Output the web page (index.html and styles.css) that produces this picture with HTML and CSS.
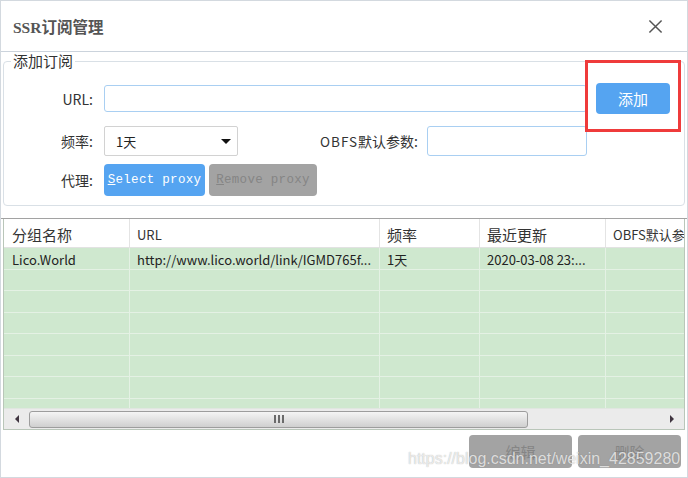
FILE: index.html
```html
<!DOCTYPE html>
<html>
<head>
<meta charset="utf-8">
<link rel="stylesheet" href="styles.css">
</head>
<body>
<div class="window">
  <div class="titlebar">
    <span class="title">SSR订阅管理</span>
    <svg class="close" viewBox="0 0 16 16" width="16" height="16"><path d="M1.5 1.5L14.5 14.5M14.5 1.5L1.5 14.5" stroke="#555" stroke-width="1.6" fill="none"/></svg>
  </div>
  <fieldset class="group">
    <legend class="legend">添加订阅</legend>
    <div class="group-body">
      <div class="row row-url">
        <span class="lbl">URL:</span>
        <div class="input input-url"></div>
        <button class="btn-add">添加</button>
      </div>
      <div class="row row-freq">
        <span class="lbl">频率:</span>
        <div class="select"><span>1天</span><span class="caret"></span></div>
        <span class="lbl-obfs"><span class="wide">OBFS</span>默认参数:</span>
        <div class="input input-obfs"></div>
      </div>
      <div class="row row-proxy">
        <span class="lbl">代理:</span>
        <button class="btn-mono btn-select"><u>S</u>elect proxy</button>
        <button class="btn-mono btn-remove"><u>R</u>emove proxy</button>
      </div>
    </div>
  </fieldset>
  <div class="divider"></div>
  <div class="grid">
    <div class="grid-head">
      <div class="hcell c1">分组名称</div>
      <div class="hcell c2 latin">URL</div>
      <div class="hcell c3">频率</div>
      <div class="hcell c4">最近更新</div>
      <div class="hcell c5">OBFS默认参数</div>
    </div>
    <div class="grid-body">
      <div class="grow">
        <div class="cell">Lico.World</div>
        <div class="cell">http://www.lico.world/link/IGMD765f...</div>
        <div class="cell">1天</div>
        <div class="cell">2020-03-08 23:...</div>
        <div class="cell"></div>
      </div>
      <div class="grow"><div class="cell"></div><div class="cell"></div><div class="cell"></div><div class="cell"></div><div class="cell"></div></div>
      <div class="grow"><div class="cell"></div><div class="cell"></div><div class="cell"></div><div class="cell"></div><div class="cell"></div></div>
      <div class="grow"><div class="cell"></div><div class="cell"></div><div class="cell"></div><div class="cell"></div><div class="cell"></div></div>
      <div class="grow"><div class="cell"></div><div class="cell"></div><div class="cell"></div><div class="cell"></div><div class="cell"></div></div>
      <div class="grow"><div class="cell"></div><div class="cell"></div><div class="cell"></div><div class="cell"></div><div class="cell"></div></div>
      <div class="grow"><div class="cell"></div><div class="cell"></div><div class="cell"></div><div class="cell"></div><div class="cell"></div></div>
      <div class="grow"><div class="cell"></div><div class="cell"></div><div class="cell"></div><div class="cell"></div><div class="cell"></div></div>
    </div>
    <div class="hscroll">
      <div class="sarrow"><span class="tri-left"></span></div>
      <div class="strack">
        <div class="sthumb"><span class="grip"></span><span class="grip"></span><span class="grip"></span></div>
      </div>
      <div class="sarrow"><span class="tri-right"></span></div>
    </div>
  </div>
  <div class="footer">
    <button class="btn-foot">编辑</button>
    <button class="btn-foot">删除</button>
  </div>
  <div class="watermark">https://blog.csdn.net/weixin_42859280</div>
  <div class="annot"></div>
</div>
</body>
</html>
```
FILE: styles.css
```css
* { box-sizing: border-box; margin: 0; padding: 0; }
html, body { width: 688px; height: 478px; overflow: hidden; background: #fff; }
body { font-family: "Noto Sans CJK SC", "Microsoft YaHei", sans-serif; font-size: 13px; color: #333; }

.window {
  position: relative;
  width: 688px; height: 478px;
  border: 1px solid #d3d9df;
  display: flex; flex-direction: column;
  background: #fff;
}

.titlebar {
  height: 51px; flex: none;
  display: flex; align-items: center; justify-content: space-between;
  padding: 0 24px 0 12px;
  border-bottom: 1px solid #cbd3dc;
}
.title { font-family: "Liberation Serif", "Noto Sans CJK SC", serif; font-weight: bold; font-size: 15.5px; color: #555; }
.close { display: block; width: 15px; height: 15px; }

.group {
  margin: 0 2px;
  border: 1px solid #d9e0e6;
  border-radius: 4px;
  padding: 13px 0 9px 0;
  min-width: 0;
}
.legend { margin-left: 7px; padding: 0 2px; font-size: 15px; line-height: 18px; color: #333; }
.group-body { display: flex; flex-direction: column; gap: 12px; }
.row { display: flex; align-items: center; }
.row-url { height: 31px; }
.row-freq { height: 30px; }
.row-proxy { height: 32px; margin-top: -4px; }
.lbl { width: 89px; margin-right: 11px; text-align: right; font-size: 14px; color: #333; white-space: nowrap; }

.input { height: 27px; border: 1px solid #a9cff2; border-radius: 3px; background: #fff; }
.input-url { width: 483px; height: 27px; }
.input-obfs { width: 160px; height: 30px; }

.btn-add {
  margin-left: 9px; width: 74px; height: 31px;
  border: none; border-radius: 4px;
  background: #55a4f1; color: #fff;
  font-family: "Noto Sans CJK SC", sans-serif; font-size: 15px;
}

.select {
  width: 134px; height: 30px;
  border: 1px solid #d2d2d2; border-radius: 2px; background: #fff;
  display: flex; align-items: center; justify-content: space-between;
  padding: 0 6px 0 11px;
  font-size: 13px; color: #222;
}
.caret { width: 0; height: 0; border-left: 5px solid transparent; border-right: 5px solid transparent; border-top: 5px solid #111; }
.lbl-obfs { width: 111px; margin-left: 69px; margin-right: 9px; font-size: 14px; color: #333; white-space: nowrap; text-align: right; }
.wide { letter-spacing: 1px; font-size: 13.5px; }

.btn-mono {
  height: 32px; border: none; border-radius: 4px;
  font-family: "Liberation Mono", "DejaVu Sans Mono", monospace; font-size: 12.5px;
  letter-spacing: 0.3px;
}
.btn-select { width: 101px; background: #55a4f1; color: #fff; }
.btn-remove { width: 108px; margin-left: 4px; background: #a3a3a3; color: #858585; }

.divider { height: 1px; background: #a2a2a2; margin-top: 12px; flex: none; }

.grid {
  margin: 0 2px; flex: none;
  border: 1px solid #b9c6b9; border-top: none;
  display: flex; flex-direction: column;
}
.grid-head {
  height: 29px;
  display: grid; grid-template-columns: 126px 250px 100px 126px 1fr;
  border-bottom: 1px solid #e2e2e2;
  background: #fff;
  overflow: hidden;
}
.hcell {
  border-right: 1px solid #e4e4e4;
  padding: 3px 0 0 7px;
  font-size: 15px; line-height: 25px; color: #333;
  white-space: nowrap; overflow: hidden;
}
.hcell.c1 { padding-left: 8px; }
.hcell.latin { font-size: 13px; }
.hcell.c5 { font-size: 13px; border-right: none; }

.grid-body { height: 160px; overflow: hidden; background: #cfe8cf; }
.grow {
  height: 21.5px;
  display: grid; grid-template-columns: 126px 250px 100px 126px 1fr;
  border-bottom: 1px solid #e4f1e4;
}
.cell {
  border-right: 1px solid #e4f1e4;
  padding: 2px 0 0 7px;
  font-size: 13px; line-height: 19px; color: #222;
  white-space: nowrap; overflow: hidden;
}
.cell:first-child { padding-left: 8px; }
.cell:last-child { border-right: none; }

.hscroll { height: 21px; display: flex; background: #ebebeb; border-top: 1px solid #e0e6e0; }
.sarrow { width: 25px; display: flex; align-items: center; justify-content: center; }
.tri-left { width: 0; height: 0; border-top: 4px solid transparent; border-bottom: 4px solid transparent; border-right: 4px solid #3f3440; }
.tri-right { width: 0; height: 0; border-top: 4px solid transparent; border-bottom: 4px solid transparent; border-left: 4px solid #3f3440; }
.strack { flex: 1; display: flex; align-items: center; }
.sthumb {
  width: 499px; height: 17px;
  border: 1px solid #9d9d9d; border-radius: 3px;
  background: linear-gradient(#f5f5f5, #e2e2e2 50%, #cfcfcf);
  display: flex; align-items: center; justify-content: center; gap: 2px;
}
.grip { width: 2px; height: 8px; background: #6a6a6a; }

.footer { flex: none; display: flex; justify-content: flex-end; gap: 6px; padding-right: 6px; margin-top: 5px; }
.btn-foot {
  width: 103px; height: 33px; border: none; border-radius: 4px;
  background: #a3a3a3; color: #858585;
  font-family: "Noto Sans CJK SC", sans-serif; font-size: 15px;
}

.watermark {
  position: absolute; left: 407px; top: 448px;
  font-family: "Liberation Sans", Arial, sans-serif; font-size: 16px; line-height: 20px;
  color: rgba(255,255,255,0.72);
  text-shadow: 0 0 1px rgba(110,110,110,0.6);
  white-space: nowrap;
}
.annot {
  position: absolute; left: 584px; top: 59px;
  width: 96px; height: 72px;
  border: 3px solid #ef3b3b;
}
```
